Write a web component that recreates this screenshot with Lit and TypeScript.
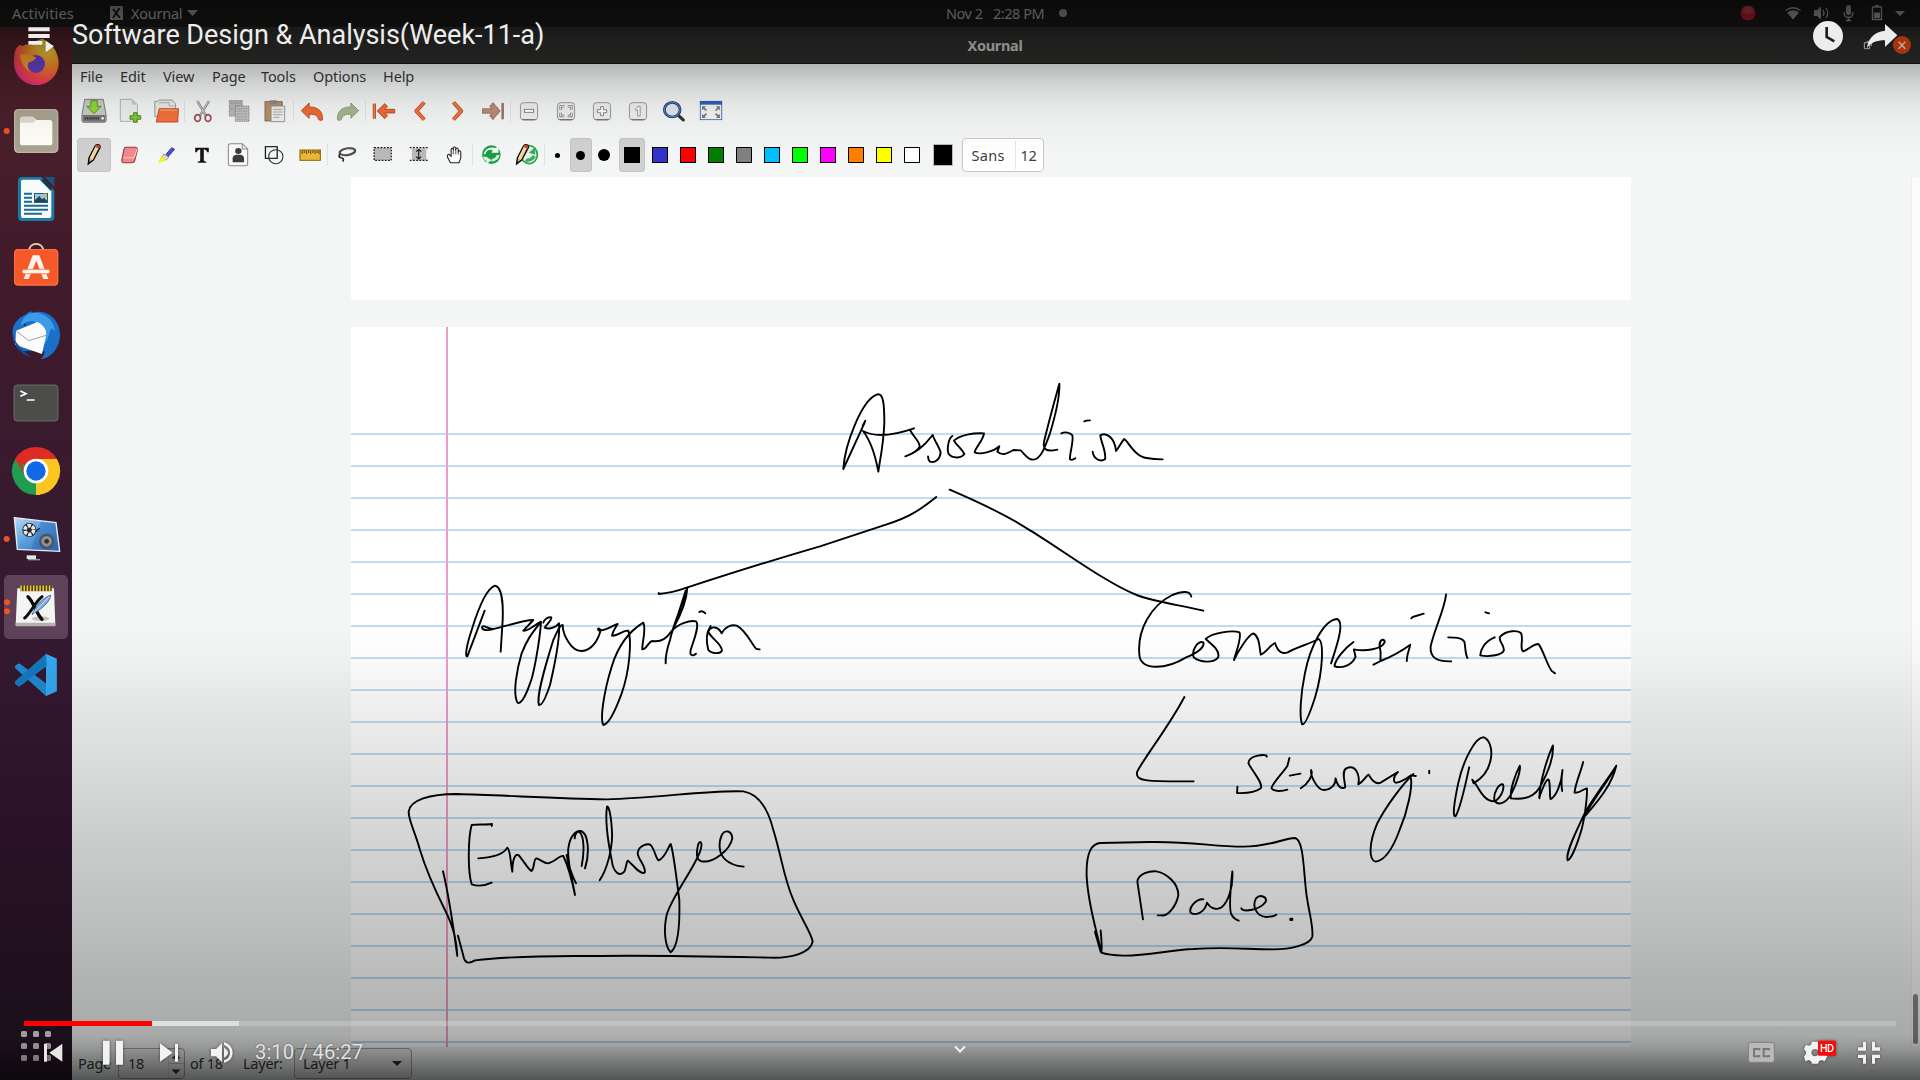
import { LitElement, html, svg, css, nothing } from "lit";
import { customElement } from "lit/decorators.js";

/* ---------- dock icons: each cell is 72x68, drawn on a 216x204 grid ---------- */
const dock = [
  { y: 27, dots: 0, art: svg`
    <defs><radialGradient id="ff" cx=".75" cy=".15" r="1"><stop offset="0" stop-color="#ffe14a"/><stop offset=".4" stop-color="#ff9a28"/><stop offset=".72" stop-color="#ff4a4a"/><stop offset="1" stop-color="#e0209a"/></radialGradient></defs>
    <path d="M47 88C55 76 62 72 66 78C76 72 84 72 92 76L104 68C112 60 122 60 128 62C150 66 176 92 176 128C176 166 146 195 109 195C72 195 42 166 42 128C42 112 43 98 47 88Z" fill="url(#ff)"/>
    <path d="M104 68C112 58 122 58 128 56C136 62 158 70 168 98C158 84 146 84 138 104C128 88 112 90 104 86Z" fill="#e8c93a"/>
    <circle cx="108" cy="132" r="27" fill="#6a44d0"/>
    <path d="M60 106C76 98 92 106 108 112C106 122 94 124 86 128C80 136 84 148 92 156C76 150 64 130 60 106Z" fill="#ffa52e"/>` },
  { y: 231, dots: 1, art: svg`
    <rect x="42" y="267" width="133" height="132" rx="13" fill="#a9a290"/><rect x="44" y="269" width="129" height="128" rx="11" fill="none" stroke="#c1bba9" stroke-width="3"/>
    <path d="M60 376V298Q60 290 68 290H98L110 300H149Q157 300 157 308V368Q157 376 149 376H68Q60 376 60 368Z" fill="#fffdf8"/>
    <path d="M60 308V298Q60 290 68 290H98L108 300L100 308Z" fill="#dedace"/>` },
  { y: 435, dots: 0, art: svg`
    <path d="M66 471H124L163 512V592Q163 603 152 603H66Q54 603 54 592V482Q54 471 66 471Z" fill="#1b7aa6"/>
    <path d="M68 479H120L154 514V588Q154 594 148 594H68Q63 594 63 588V484Q63 479 68 479Z" fill="#f8fbfc"/>
    <path d="M134 471H163V500Z" fill="#13587c"/><path d="M120 479L154 514L154 502L132 479Z" fill="#0d3c58"/>
    <path d="M72 521H96M72 533H96M72 545H96M72 557H144M72 569H144M72 581H126" stroke="#1d6b92" stroke-width="6"/>
    <rect x="102" y="519" width="42" height="30" fill="#1b6184"/><rect x="105" y="522" width="36" height="24" fill="#8ec9ea"/><path d="M105 546V540L118 528L126 538L132 533L141 542V546Z" fill="#333f45"/><circle cx="136" cy="525" r="5" fill="#f0b030"/>` },
  { y: 639, dots: 0, art: svg`
    <path d="M87 694C87 664 130 664 130 694" fill="none" stroke="#f3d0b2" stroke-width="5"/>
    <rect x="42" y="687" width="133" height="110" rx="12" fill="#f5592a"/><rect x="44" y="689" width="129" height="106" rx="10" fill="none" stroke="#ff8258" stroke-width="2"/>
    <path d="M98 706H118L145 777H130L109 722L86 777H71Z" fill="#fff3ea"/><rect x="66" y="748" width="84" height="13" rx="6" fill="#fff3ea" stroke="#f5592a" stroke-width="2"/>` },
  { y: 843, dots: 0, art: svg`
    <path d="M38 930C42 906 60 890 76 884C90 870 98 874 100 878C140 866 182 900 180 948C178 984 154 1014 122 1018C132 1008 134 1000 134 994L60 992C44 976 36 958 38 930Z" fill="#1b6fc9"/>
    <path d="M62 918C66 892 82 878 106 878C140 880 162 902 166 938C160 926 154 922 150 932C144 962 130 980 118 990C126 950 124 912 100 904C86 900 74 908 62 918Z" fill="#3b9be8"/>
    <path d="M48 932L112 906C132 916 142 932 138 948L126 1002L46 974Z" fill="#fbfbfc"/><path d="M48 932L86 962L138 946" fill="none" stroke="#8b8b96" stroke-width="2.5"/>
    <path d="M38 938C42 980 62 1002 94 1012C78 998 60 984 46 962Z" fill="#154d99"/><circle cx="74" cy="914" r="3" fill="#0b1a33"/>` },
  { y: -3, dots: 0, art: svg`
    <rect x="42" y="45" width="132" height="108" rx="10" fill="#4c4c4a" stroke="#767673" stroke-width="2.5"/>
    <path d="M61 63L78 71L61 79M80 90H104" fill="none" stroke="#fff" stroke-width="5"/>` },
  { y: 201, dots: 0, art: svg`
    <path d="M108 303L45.600 267A72 72 0 0 1 170.400 267Z" fill="#dd2c24"/><path d="M108 303L45.600 267A72 72 0 0 0 108 375Z" fill="#1f9d50"/><path d="M108 303L170.400 267A72 72 0 0 1 108 375Z" fill="#fcc521"/>
    <path d="M108 267H170.400A72 72 0 0 1 180 303L138 303Z" fill="#fcc521"/><path d="M139 321L108 375A72 72 0 0 0 120 374Z" fill="#fcc521"/><path d="M77 321L45.600 267L56 252Z" fill="#dd2c24"/>
    <circle cx="108" cy="303" r="37" fill="#fff"/><circle cx="108" cy="303" r="29" fill="#1368e8"/>` },
  { y: 405, dots: 1, art: svg`
    <defs><linearGradient id="kz" x2="1" y2="1"><stop offset="0" stop-color="#b9dcf8"/><stop offset=".45" stop-color="#5aa0dc"/><stop offset="1" stop-color="#2b62b4"/></linearGradient></defs>
    <path d="M43 443L168 458L179 544L52 538Z" fill="url(#kz)" stroke="#e6eef4" stroke-width="4"/><path d="M122 455L165 460L174 540L94 538Z" fill="#245fb8" opacity=".35"/>
    <circle cx="88" cy="480" r="21" fill="#23272b"/><circle cx="88" cy="480" r="13" fill="none" stroke="#e8e8e8" stroke-width="11" stroke-dasharray="10 3.600"/><path d="M106 484C114 486 110 474 120 476" fill="none" stroke="#222" stroke-width="4"/>
    <circle cx="140" cy="514" r="23" fill="#4d5357"/><circle cx="140" cy="514" r="16" fill="#8b9196"/><circle cx="140" cy="514" r="7" fill="#2c2f32"/>
    <path d="M80 556H108V567H80Z" fill="#e2e5e6"/><path d="M84 569H120" stroke="#9a9aa0" stroke-width="4"/>` },
  { y: 609, dots: 2, active: true, art: svg`
    <path d="M52 655H162L166 766H47Z" fill="#f4f4f2"/><path d="M47 758H166V769H47Z" fill="#b4b2b0"/>
    <ellipse cx="122" cy="746" rx="26" ry="7" fill="#c2c2c2"/>
    <path d="M61 655H155" stroke="#4a3c10" stroke-width="17"/><path d="M61 655H157" stroke="#f1cf45" stroke-width="17" stroke-dasharray="4.500 5"/>
    <path d="M84 680C100 694 108 730 126 748" fill="none" stroke="#0b0b0b" stroke-width="10" stroke-linecap="round"/><path d="M126 680C106 694 92 730 74 744" fill="none" stroke="#0b0b0b" stroke-width="9" stroke-linecap="round"/>
    <path d="M96 734C104 712 124 686 152 675C152 692 130 714 104 728Z" fill="#7fa9d6" stroke="#355f96" stroke-width="2.500"/><path d="M100 730L150 678" stroke="#dcecfa" stroke-width="2.500"/>` },
  { y: 813, dots: 0, art: svg`
    <path d="M138 852L170 866V964L138 978L45 894Q43 890 46 887L54 881Q58 879 61 882L140 942V888L61 947Q58 950 54 948L46 941Q43 938 46 934Z" fill="#1f8ad2"/>
    <path d="M138 852L170 866V964L138 978Z" fill="#35a8ee"/><path d="M138 852L46 934Q43 938 46 941L54 948Q58 950 61 947L140 886Z" fill="#1478bd"/>` },
];

/* ---------- toolbar icons: 34x34 boxes centred on (cx, cy) of a 2.8 x 3 grid ---------- */
const orange = "#ee6a35";
const zoomBox = (cx: number) => svg`<rect x="${cx - 24}" y="308" width="48" height="52" rx="9" fill="#eeeeed" stroke="#8c8c8a" stroke-width="2.500"/><path d="M${cx - 18} 359H${cx + 18}" stroke="#666" stroke-width="3"/>`;
const mainBar: { cx: number; sep?: boolean; art: unknown }[] = [
  { cx: 264, art: svg`<path d="M238 298H290L298 345V362Q298 367 292 367H236Q230 367 230 362V345Z" fill="#c9c9c7" stroke="#555" stroke-width="2"/><path d="M232 345H296V365H232Z" fill="#777"/><path d="M238 355H278" stroke="#3c3c3c" stroke-width="7" stroke-dasharray="4 2"/><circle cx="288" cy="355" r="4" fill="#eee"/><path d="M255 302H273V319H284L264 341L244 319H255Z" fill="#8fd63a" stroke="#4c8a14" stroke-width="2.500"/>` },
  { cx: 367, art: svg`<path d="M340 298H372L388 314V364H340Z" fill="#eceeea" stroke="#a9aba7" stroke-width="2.500"/><path d="M372 298V314H388Z" fill="#c9cbc7"/><path d="M377 338H387V347H397V358H387V367H377V358H367V347H377Z" fill="#7fc53a" stroke="#467f12" stroke-width="2.500"/>` },
  { cx: 466, sep: true, art: svg`<path d="M432 304H440L444 300H480L490 312V350H432Z" fill="#e9e9e7" stroke="#8f8f8d" stroke-width="2.500"/><path d="M444 308H472V318H488" fill="none" stroke="#999" stroke-width="2"/><path d="M444 326H498L496 366H436Z" fill="#f4703f" stroke="#c33b12" stroke-width="2.500"/><path d="M446 330H495" stroke="#ffab85" stroke-width="3"/>` },
  { cx: 570, art: svg`<path d="M554 303L578 346M587 303L562 346" stroke="#8a8a88" stroke-width="7"/><path d="M554 303L578 346M587 303L562 346" stroke="#dadad8" stroke-width="2.500"/><ellipse cx="555" cy="354" rx="8" ry="10" fill="none" stroke="#9c5560" stroke-width="5"/><ellipse cx="584" cy="354" rx="8" ry="10" fill="none" stroke="#9c5560" stroke-width="5"/>` },
  { cx: 669, art: svg`<g stroke="#757575" stroke-width="2.500" stroke-dasharray="3 2"><rect x="642" y="302" width="36" height="46" fill="#b5b6b5"/><rect x="659" y="318" width="38" height="46" fill="#c0c1c0"/></g><path d="M664 326H692M664 334H692M664 342H692M664 350H692M664 358H692M646 310H674M646 326H656" stroke="#8c8c8c" stroke-width="3" stroke-dasharray="3 3"/>` },
  { cx: 771, sep: true, art: svg`<rect x="743" y="305" width="48" height="58" fill="#b58f68" stroke="#7f6140" stroke-width="2.500"/><rect x="755" y="301" width="22" height="11" rx="3" fill="#888"/><path d="M760 318H798V365H760Z" fill="#eeeeec" stroke="#8d8d8b" stroke-width="2.500"/><path d="M766 328H792M766 336H792M766 344H792M766 352H784" stroke="#a2a2a0" stroke-width="2.500"/>` },
  { cx: 874, art: svg`<path d="M844 332L866 309V321C892 320 906 336 903 360Q896 363 892 358C890 346 882 342 866 343V355Z" fill="${orange}" stroke="#b5431a" stroke-width="2.500"/>` },
  { cx: 975, sep: true, art: svg`<path d="M1005 332L983 309V321C957 320 943 336 946 360Q953 363 957 358C959 346 967 342 983 343V355Z" fill="#a3b78c" stroke="#6f8558" stroke-width="2.500" stroke-dasharray="4 1.500"/>` },
  { cx: 1077, art: svg`<path d="M1050 311V356" stroke="#c4481e" stroke-width="9"/><path d="M1050 311V356" stroke="#f4855a" stroke-width="4"/><path d="M1058 333L1079 311L1087 319L1080 328H1107V339H1080L1087 347L1079 356Z" fill="${orange}" stroke="#b5431a" stroke-width="2.500"/>` },
  { cx: 1178, art: svg`<path d="M1187 307L1165 333L1187 359" fill="none" stroke="#b5431a" stroke-width="11" stroke-linejoin="round"/><path d="M1187 307L1165 333L1187 359" fill="none" stroke="#f4753f" stroke-width="7"/>` },
  { cx: 1281, art: svg`<path d="M1271 307L1293 333L1271 359" fill="none" stroke="#b5431a" stroke-width="11" stroke-linejoin="round"/><path d="M1271 307L1293 333L1271 359" fill="none" stroke="#f4753f" stroke-width="7"/>` },
  { cx: 1381, sep: true, art: svg`<path d="M1408 309V358" stroke="#9d6f5f" stroke-width="7"/><path d="M1401 333L1381 309L1372 319L1378 326H1352V340H1378L1372 347L1381 358Z" fill="#bd8b79" stroke="#8f6252" stroke-width="3" stroke-dasharray="4 1.500"/>` },
  { cx: 1484, art: svg`${zoomBox(1484)}<rect x="1471" y="328" width="26" height="9" fill="#fff" stroke="#777" stroke-width="2.500"/>` },
  { cx: 1585, art: svg`${zoomBox(1585)}<path d="M1570 329V319H1580M1590 319H1600V329M1600 338V348H1590M1580 348H1570V338" fill="none" stroke="#777" stroke-width="7"/><path d="M1570 329V319H1580M1590 319H1600V329M1600 338V348H1590M1580 348H1570V338" fill="none" stroke="#fff" stroke-width="2.500"/>` },
  { cx: 1686, art: svg`${zoomBox(1686)}<path d="M1682 320H1690V329H1699V338H1690V347H1682V338H1673V329H1682Z" fill="#fff" stroke="#777" stroke-width="2.500"/>` },
  { cx: 1786, art: svg`${zoomBox(1786)}<path d="M1779 326L1786 319H1792V348H1785V330H1779Z" fill="#fff" stroke="#888" stroke-width="2.500"/>` },
  { cx: 1886, art: svg`<path d="M1898 346L1912 360" stroke="#2f2f2f" stroke-width="9" stroke-linecap="round"/><circle cx="1881" cy="329" r="22" fill="#dfe5ee" stroke="#27407f" stroke-width="8"/><circle cx="1881" cy="329" r="22" fill="none" stroke="#6f8cc4" stroke-width="2.500"/>` },
  { cx: 1988, art: svg`<rect x="1958" y="304" width="60" height="55" fill="#f2f2f0" stroke="#3d68b0" stroke-width="2.500"/><rect x="1957" y="303" width="62" height="11" fill="#2e62b4"/><path d="M1963 319H1974L1970 323L1977 330L1973 333L1967 327L1963 331ZM2013 319H2002L2006 323L1999 330L2003 333L2009 327L2013 331ZM1963 354H1974L1970 350L1977 343L1973 340L1967 346L1963 342ZM2013 354H2002L2006 350L1999 343L2003 340L2009 346L2013 342Z" fill="#777"/>` },
];

const pencil = (dx: number) => svg`<g transform="translate(${dx} 0)"><path d="M248 492L250 474L268 437Q273 431 280 436L281 442L262 480Z" fill="#e9b06a" stroke="#0c0c0c" stroke-width="4"/><path d="M252 475L268 440L276 444L260 480Z" fill="#f3d4a4"/><path d="M266 440L270 434L281 437L278 446Z" fill="#c9463f"/><path d="M248 493L249 483L255 486Z" fill="#111"/></g>`;
const penBar: { cx: number; sep?: boolean; on?: boolean; art: unknown }[] = [
  { cx: 264, on: true, art: pencil(0) },
  { cx: 362, art: svg`<path d="M350 442H378Q384 444 383 449L375 483Q373 488 367 488H343Q338 486 339 480L345 448Q346 443 350 442Z" fill="#f0898d" stroke="#8e3a40" stroke-width="3"/><path d="M345 473H374L382 446" fill="none" stroke="#fbc2c4" stroke-width="3"/>` },
  { cx: 464, art: svg`<path d="M464 463L480 443L488 448L470 470Z" fill="#4e4ee0" stroke="#222a80" stroke-width="2.500"/><path d="M458 462L472 472L464 480L452 472Z" fill="#dedede" stroke="#777" stroke-width="2"/><path d="M452 470L464 480L444 487Z" fill="#ffff00" stroke="#e6e600" stroke-width="2"/>` },
  { cx: 566, art: svg`<path d="M547 443H585V457H581Q579 449 571 448V481Q572 485 578 485V488H554V485Q561 485 561 481V448Q553 449 551 457H547Z" fill="#141414"/>` },
  { cx: 666, art: svg`<path d="M645 431H678L693 447V491Q693 497 687 497H645Q639 497 639 491V437Q639 431 645 431Z" fill="#fafafa" stroke="#8c8c8c" stroke-width="3"/><path d="M678 431V447H693" fill="none" stroke="#8c8c8c" stroke-width="3"/><circle cx="667" cy="453" r="9" fill="#3b3b3b"/><path d="M651 487V475Q652 464 662 464H672Q682 464 683 475V487Z" fill="#3b3b3b"/>` },
  { cx: 767, art: svg`<rect x="743" y="440" width="33" height="35" fill="none" stroke="#161616" stroke-width="3.500"/><ellipse cx="772" cy="470" rx="20" ry="21" fill="none" stroke="#333" stroke-width="3"/>` },
  { cx: 866, sep: true, art: svg`<rect x="838" y="450" width="57" height="31" fill="#e8b73a" stroke="#8b6508" stroke-width="3"/><path d="M844 452V462M850 452V459M856 452V462M862 452V459M868 452V462M874 452V459M880 452V462M886 452V459M891 452V462" stroke="#2c2000" stroke-width="2.200"/>` },
  { cx: 970, art: svg`<ellipse cx="974" cy="455" rx="22" ry="10" fill="none" stroke="#222" stroke-width="6" transform="rotate(-10 974 455)"/><ellipse cx="974" cy="455" rx="22" ry="10" fill="none" stroke="#aaa" stroke-width="1.500" transform="rotate(-10 974 455)"/><path d="M954 462Q946 470 956 473Q966 474 961 485" fill="none" stroke="#222" stroke-width="4.500"/>` },
  { cx: 1071, art: svg`<rect x="1049" y="443" width="48" height="38" fill="#b9b9b9" stroke="#161616" stroke-width="3.500" stroke-dasharray="5 4"/>` },
  { cx: 1171, art: svg`<rect x="1154" y="445" width="40" height="36" fill="#b9b9b9"/><path d="M1148 443H1198M1148 481H1198" stroke="#161616" stroke-width="3.500" stroke-dasharray="5 4"/><path d="M1173 449V476M1166 455L1173 448L1180 455M1166 470L1173 477L1180 470" fill="none" stroke="#111" stroke-width="3"/>` },
  { cx: 1272, sep: true, art: svg`<path d="M1262 488L1254 472Q1252 463 1258 463L1264 469V448Q1266 442 1270 448V444Q1273 436 1277 444V447Q1281 440 1284 448V454Q1288 449 1291 456V474L1286 488Z" fill="#fff" stroke="#222" stroke-width="3"/><path d="M1270 448V463M1277 447V463M1284 452V464" stroke="#222" stroke-width="2.200"/>` },
  { cx: 1375, art: svg`<ellipse cx="1376" cy="464" rx="26" ry="28" fill="#1c9c47"/><path d="M1359 463Q1362 446 1380 450L1376 458H1396V438L1389 444Q1362 436 1354 463Z" fill="#f3fff5"/><path d="M1362 470L1377 481L1362 492V485Q1354 478 1352 470ZM1377 477Q1388 476 1391 465H1399Q1396 482 1377 485Z" fill="#d9f5df"/>` },
  { cx: 1475, sep: true, art: svg`<ellipse cx="1481" cy="464" rx="23" ry="27" fill="#e5f2e6" stroke="#2aa552" stroke-width="5"/><path d="M1498 442V464L1480 458Z M1468 486Q1492 486 1500 470L1490 466Q1486 476 1474 476Z" fill="#38ad5e"/>${pencil(1198)}` },
];

const widths = [{ r: 2.5, w: 25 }, { r: 4.5, w: 22, on: true }, { r: 6, w: 25 }];
const colours = ["#000000", "#3333cc", "#ff0000", "#008000", "#808080", "#00c0ff", "#00ff00", "#ff00ff", "#ff8000", "#ffff00", "#ffffff"];
const menus = ["File", "Edit", "View", "Page", "Tools", "Options", "Help"];

/* ---------- pen strokes ---------- */
const ink = [
  { t: "translate(820 370) scale(.33333)", d: [
    "M136 152L128 167M134 158L70 297C74 225 125 88 172 73C190 70 193 100 193 160C190 230 178 280 175 305C165 250 150 210 129 183C160 200 210 200 282 175M270 180C280 200 300 215 299 230C290 246 270 254 256 259C290 250 315 225 338 195C345 215 360 235 362 248C360 268 345 280 330 275Q324 270 324 259",
    "M397 198C385 205 380 240 386 252C400 268 425 264 433 252C425 235 408 225 402 212C420 195 460 188 492 190C490 210 465 235 464 247C480 255 520 245 538 229L532 245C545 258 560 252 580 240L602 241C612 250 622 268 638 269C660 270 672 240 690 190C705 140 720 80 718 41C710 70 690 140 672 215C668 240 680 246 712 239",
    "M724 190C735 184 752 188 757 196C762 215 748 250 750 268C756 272 762 268 766 265M793 154L799 152L810 151",
    "M818 245C820 265 840 278 855 268C860 245 842 215 841 196C860 185 885 205 888 243C895 235 905 215 913 207C925 215 945 260 980 264Q1000 268 1028 268",
    "M389 359C480 398 560 435 630 481C720 535 860 640 950 675C1010 697 1080 705 1150 722"] },
  { t: "translate(0 0)", d: ["M936.300 497C920 510 908 518 886.700 524.300L820 546.300C790 555 750 567 686.700 587.700Q672 593 658.700 594V593"] },
  { t: "translate(440 560) scale(.33333)", d: [
    "M134 152L82 289C74 290 80 255 95 210C115 145 140 85 165 77C185 80 190 130 188 180L182 275M160 207C145 212 127 212 126 202C130 190 145 212 165 206C200 198 250 180 280 180L250 212C265 215 290 190 303 185C300 240 280 350 270 370C255 415 240 435 232 427C218 400 230 330 245 280C262 235 280 215 303 185",
    "M310 188C312 178 325 170 334 172C335 182 322 190 314 203C330 210 350 200 357 190C362 240 340 330 330 375C315 420 305 437 297 435C288 410 315 320 340 240C352 215 358 195 368 195C368 225 395 275 425 273C455 272 475 240 482 210C475 200 470 208 478 212C500 212 530 190 533 192C525 205 518 215 516 227C535 228 550 210 565 212C575 240 570 330 545 400C525 455 505 492 490 495C480 480 490 400 515 320C535 255 565 215 610 188C620 210 605 250 607 268C620 268 625 245 637 243C660 247 680 235 693 215C715 190 750 180 768 184C780 195 760 245 752 270C748 290 760 288 768 281",
    "M742 83C730 130 700 190 690 240C680 270 676 290 677 310M742 83C740 120 725 160 700 205M737 92L704 195M778 156C785 151 792 155 796 160",
    "M812 198C800 215 797 240 805 270C815 282 840 282 846 272C845 250 812 235 805 215C815 195 835 200 845 220C855 200 875 193 890 197C920 212 940 262 950 267L959 268"] },
  { t: "translate(1100 570) scale(.34439 .33333)", d: [
    "M265 80C262 62 240 62 210 75C150 105 105 180 115 260C122 300 190 300 250 262C285 248 305 230 300 217C285 212 265 238 272 262C290 278 330 280 343 262C350 240 320 220 307 207C325 188 385 180 405 187C412 205 395 245 389 270C400 245 430 195 445 190C465 200 462 235 467 254C480 250 495 225 508 219C515 240 525 255 545 247C575 230 600 225 635 207C650 215 648 300 625 380C608 435 595 465 587 463C578 440 583 370 595 310C610 230 650 150 688 147C710 155 692 215 671 280",
    "M736 216C710 235 682 270 681 289C710 298 735 280 742 260L737 238C770 245 820 238 827 215C822 202 810 212 812 230C818 250 814 265 814 272M794 284L815 273C850 258 880 240 901 224C898 240 890 255 891 273M904 145L908 141L940 131",
    "M1005 73C1000 120 970 180 960 230C958 265 980 275 1020 274M1011 202C1030 202 1050 202 1058 215C1062 235 1060 250 1067 264M1119 127L1130 130",
    "M1146 202C1115 215 1105 240 1104 256C1130 262 1170 255 1173 240C1172 220 1155 212 1162 200C1180 180 1215 180 1223 190C1230 210 1218 235 1228 244C1245 240 1255 222 1273 222C1285 235 1300 290 1312 303L1321 310",
    "M245 381C200 470 130 560 108 605C100 635 140 635 272 634",
    "M484 560C488 550 430 555 431 580C440 600 475 640 467 655C450 668 420 670 398 669L399 650M550 564L544 588C530 610 500 640 498 655C505 666 530 664 544 659M551 617L582 611",
    "M583 655C605 640 620 615 613 600C610 615 630 660 650 660C675 658 685 640 684 625C690 650 700 658 712 652C712 635 700 605 715 595C745 580 755 620 750 643C765 635 770 620 780 614C790 630 800 645 815 638L865 606C850 620 850 640 862 638C880 635 895 622 903 616L917 618M903 625C907 650 895 720 870 780C845 850 820 873 800 875C780 870 780 820 805 760C830 710 880 640 910 612M956 602V610",
    "M1072 592C1060 650 1045 720 1032 739C1022 740 1030 690 1040 640C1055 570 1090 500 1115 502C1145 515 1150 600 1085 640L1081 629C1095 640 1110 695 1145 694C1165 685 1175 655 1170 643C1160 640 1142 665 1145 690C1155 710 1180 700 1195 670C1210 640 1222 600 1219 587C1205 615 1190 660 1193 685C1230 690 1260 680 1275 655C1300 610 1318 560 1315 526C1300 560 1275 640 1276 685",
    "M1276 680C1290 640 1300 620 1304 632C1308 650 1305 675 1308 687C1325 680 1340 640 1343 600C1340 620 1340 650 1342 663M1403 576C1395 610 1380 640 1378 668C1395 670 1405 655 1414 655C1415 690 1405 760 1395 790C1380 840 1365 870 1358 871C1350 850 1385 780 1405 735C1430 685 1480 620 1499 587C1485 650 1440 700 1403 745C1425 700 1470 640 1498 590"] },
  { t: "translate(1060 820) scale(.33333)", d: [
    "M122 331C124 360 127 380 124 398C110 330 85 260 80 170C78 110 88 72 120 69L270 66C400 64 460 80 550 80C630 80 670 55 705 54C735 60 730 180 742 240C750 290 760 320 757 350C750 375 690 388 640 388C560 388 500 380 400 387C330 390 260 408 190 407C160 406 135 402 124 398L105 335M106 340L122 395",
    "M249 298L232 185C235 160 270 152 290 154C320 160 355 190 355 225C350 255 325 290 305 286L293 286M430 238C410 235 385 262 392 278C410 290 435 275 441 248C450 265 470 272 485 262C505 245 520 200 517 154C512 200 505 270 515 285C522 297 530 300 536 302M544 265C550 278 600 270 617 245C622 230 600 222 588 235C575 260 590 290 620 291C635 290 645 288 649 284M691 296H697V300H691Z"] },
  { t: "translate(390 770) scale(.33333)", d: [
    "M159 304C175 370 190 470 202 558C200 520 195 480 165 420C130 350 105 290 90 240C75 185 55 150 56 125C60 90 120 72 200 72C350 76 500 86 650 88C800 85 950 60 1060 64C1110 72 1135 120 1150 180C1175 260 1180 320 1210 390C1235 450 1265 490 1268 515C1262 550 1200 565 1140 563C1000 560 800 555 600 558C480 557 350 560 255 571C240 580 228 582 222 565L204 497",
    "M305 168L306 162C285 165 260 162 245 165C235 200 232 300 245 343C265 350 290 345 305 338M265 265C300 263 340 255 352 233C362 240 362 285 367 305C367 270 375 250 385 255C400 270 415 300 425 303C435 290 430 265 440 265C455 270 460 280 475 280C495 275 510 255 520 258C535 290 550 350 555 375C550 340 530 270 535 235C540 195 560 180 573 183C595 190 600 250 585 295M554 205C555 195 560 185 568 185C585 200 582 255 575 288M530 255C535 290 548 320 558 340",
    "M629 331C650 300 672 230 665 170C662 130 655 105 651 110C645 150 655 220 665 270C670 310 690 320 703 305C710 290 708 275 714 272C730 285 750 315 764 308C770 290 745 270 743 250C745 225 775 220 782 225C795 240 798 268 806 271C825 265 835 230 842 222C850 240 860 330 868 390C870 470 865 530 842 547C825 530 820 480 830 435C845 380 910 300 930 245C940 215 930 210 925 222C918 250 918 270 935 274C970 280 1020 240 1027 205C1025 180 1005 180 997 192C985 215 985 250 1005 268C1020 282 1040 288 1061 290"] },
];

@customElement("app-root")
export class AppRoot extends LitElement {
  static styles = css`
    :host { display: block; width: 1920px; height: 1080px; overflow: hidden; position: relative; background: #000; font-family: "Noto Sans", "Open Sans", sans-serif; font-size: 14.5px; color: #3c3c3c; }
    * { box-sizing: border-box; }
    svg { display: block; flex: none; }
    .desktop { width: 1920px; height: 1080px; display: flex; flex-direction: column; }
    .shell { height: 27px; flex: none; background: #1d1d1c; color: #d6d6d4; display: grid; grid-template-columns: 98px 848px 47px 63px 1fr; align-items: center; }
    .shell span { line-height: 20px; white-space: nowrap; padding-bottom: 2px; }
    .act { padding-left: 12px; letter-spacing: .15px; }
    .shell .appname { display: flex; align-items: center; gap: 8px; padding-left: 12px; letter-spacing: -.25px; }
    .caret { margin-left: -3px; }
    .date { letter-spacing: -.45px; }
    .tray { display: flex; justify-content: flex-end; }
    .below { flex: 1; display: flex; min-height: 0; }
    .dock { width: 72px; flex: none; padding-top: 2px; display: flex; flex-direction: column; background: linear-gradient(#50202a 0, #471d2a 12%, #3c1a2c 32%, #351a31 55%, #321530 75%, #261626 100%); }
    .app { width: 72px; height: 68px; flex: none; position: relative; }
    .app.active::before { content: ""; position: absolute; left: 4px; top: 2px; width: 64px; height: 64px; border-radius: 5px; background: #5f4259; }
    .app svg { position: relative; }
    .grid { margin: auto 0 19px 21px; display: grid; grid-template-columns: repeat(3, 6px); gap: 6px; }
    .grid i { height: 6px; border-radius: 1.5px; background: #e9e2e8; }
    .window { flex: 1; display: flex; flex-direction: column; min-width: 0; background: #f4f6f6; }
    .titlebar { height: 37px; flex: none; background: linear-gradient(#323130, #2f2e2d); border-bottom: 1px solid #171716; display: grid; place-items: center; color: #d8d5d2; font-weight: 700; font-size: 14.5px; padding: 0 2px 0 0; letter-spacing: -.3px; }
    .menu { height: 25px; flex: none; display: grid; grid-template-columns: 40px 43px 49px 49px 52px 70px 60px; padding: 0 0 2px 8px; align-items: center; color: #393939; letter-spacing: -.1px; }
    .bar { display: flex; align-items: center; flex: none; padding-left: 4px; height: 44px; }
    .slot { width: 36.28px; display: grid; place-items: center; position: relative; flex: none; }
    .two .slot { width: 36.06px; }
    .slot.sep { background: linear-gradient(#e2e4e3, #e2e4e3) right center / 1px 22px no-repeat; }
    .on { background: #d0d0d0; border-radius: 4px; box-shadow: inset 0 0 0 1px #c6c6c6; }
    .dots { display: flex; }
    .dot { height: 34px; display: grid; place-items: center; }
    .dot i { border-radius: 50%; background: #000; }
    .swatches { display: flex; margin-left: 1px; }
    .swatch { width: 28px; height: 34px; display: grid; place-items: center; }
    .swatch.on { width: 26px; margin: 0 1px; }
    .swatch i { width: 16px; height: 16px; border: 1px solid #000; }
    .big { width: 20px; height: 22px; background: #000; border: 1px solid #bbb; margin: 0 9px 0 7px; }
    .font { height: 34px; width: 82px; border: 1px solid #c9c9c9; border-radius: 4px; background: #fff; display: flex; align-items: center; padding-left: 9px; }
    .font b { font-weight: 400; width: 43px; letter-spacing: .3px; } .font em { font-style: normal; border-left: 1px solid #e4e4e4; padding-left: 5px; line-height: 28px; letter-spacing: -.4px; }
    .work { flex: 1; display: flex; min-height: 0; }
    .pages { flex: 1; display: flex; flex-direction: column; align-items: flex-start; gap: 27px; padding-left: 279px; }
    .page { width: 1280px; background: #fff; }
    .page.prev { height: 123px; } .page.cur { height: 720px; }
    .scroll { width: 9px; background: #fbfbfb; border-left: 1px solid #eee; padding: 817px 2px 0 1px; }
    .scroll i { display: block; width: 5px; height: 50px; border-radius: 3px; background: #8c8988; }
    .status { height: 33px; flex: none; display: flex; align-items: center; padding-left: 6px; color: #383838; }
    .status span { white-space: nowrap; letter-spacing: -.25px; padding-bottom: 2px; }
    .spin { width: 67px; height: 31px; border: 1px solid #a5a5a5; border-radius: 4px; background: #f0f0f0; display: flex; align-items: center; padding-left: 9px; justify-content: space-between; }
    .w-page { width: 40px; } .w-of { width: 53px; margin-left: 5px; } .w-layer { width: 51px; }
    .combo { width: 118px; height: 31px; border: 1px solid #a5a5a5; border-radius: 4px; background: #efefee; display: flex; align-items: center; justify-content: space-between; padding: 0 9px 0 8px; }
    .shade { position: absolute; left: 0; width: 1920px; pointer-events: none; }
    .shade.top { top: 0; height: 160px; background: linear-gradient(rgba(0,0,0,.66), rgba(0,0,0,.54) 22px, rgba(0,0,0,.36) 42px, rgba(0,0,0,.26) 64px, rgba(0,0,0,.14) 84px, rgba(0,0,0,.06) 105px, rgba(0,0,0,.02) 130px, rgba(0,0,0,0)); }
    .shade.bottom { bottom: 0; height: 460px; background: linear-gradient(rgba(0,0,0,0), rgba(0,0,0,.015) 35px, rgba(0,0,0,.06) 80px, rgba(0,0,0,.115) 150px, rgba(0,0,0,.175) 230px, rgba(0,0,0,.225) 300px, rgba(0,0,0,.27) 360px, rgba(0,0,0,.31) 415px, rgba(0,0,0,.38) 427px, rgba(0,0,0,.51) 442px, rgba(0,0,0,.66)); }
    .player { position: absolute; inset: 0; display: flex; flex-direction: column; font-family: Roboto, sans-serif; color: #ededed; }
    .head { height: 72px; display: flex; align-items: center; }
    .head h1 { margin: 0; width: 1732px; font-weight: 400; font-size: 27px; line-height: 70px; white-space: nowrap; padding-bottom: 2px; letter-spacing: -.02px; }
    .track { margin: auto 24px 0; height: 5px; background: rgba(255,255,255,.2); display: flex; flex: none; }
    .track .played { width: 128px; background: #f00; } .track .loaded { width: 87px; background: rgba(255,255,255,.52); }
    .controls { height: 54px; flex: none; display: grid; grid-template-columns: 1fr auto 1fr; padding: 7px 0 0; align-items: start; }
    .left, .right { display: flex; align-items: center; height: 40px; } .left { padding-left: 40px; }
    .right { justify-content: flex-end; padding-right: 35px; }
    .time { font-size: 20.3px; color: #e2e2e2; text-shadow: 0 0 2px rgba(0,0,0,.45); line-height: 38px; padding-bottom: 2px; }
    .g26 { margin-right: 26px; } .g25 { margin-right: 25px; } .g20 { margin-right: 20px; } .g15 { margin-right: 15px; }
    .chev { margin-top: 9px; } .sh { filter: drop-shadow(0 0 1.500px rgba(0,0,0,.5)); }
  `;

  private slot34(i: { cx: number; sep?: boolean; on?: boolean; art: unknown }, cy: number) {
    return html`<div class="slot ${i.sep ? "sep" : ""}"><svg class=${i.on ? "on" : ""} width="34" height="34" viewBox="${i.cx - 47.6} ${cy - 51} 95.2 102" preserveAspectRatio="none">${i.art}</svg></div>`;
  }

  render() {
    const rules = Array.from({ length: 20 }, (_, k) => 433 + 32 * k);
    return html`
      <div class="desktop">
        <div class="shell">
          <span class="act">Activities</span>
          <span class="appname"><svg width="13" height="14" viewBox="0 0 13 14"><rect width="13" height="14" rx="1" fill="#b9b9b7"/><path d="M3 3L10 12M9.500 2L3 12" stroke="#222" stroke-width="2"/></svg>Xournal<svg class="caret" width="11" height="6" viewBox="0 0 11 6"><path d="M0 0H11L5.500 6Z" fill="#c0c0be"/></svg></span>
          <span class="date">Nov 2</span><span class="date">2:28 PM</span>
          <div class="tray">
            <svg width="864" height="27" viewBox="1056 0 864 27">
              <circle cx="1063" cy="13" r="4" fill="#b5b5b3"/>
              <circle cx="1748" cy="13" r="7.500" fill="#e0203a"/><ellipse cx="1748" cy="10" rx="5.500" ry="4" fill="#f08a70" opacity=".5"/>
              <g fill="#bbb"><path d="M1787 12.500Q1793 8 1799 12.500L1793 19.500Z"/><path d="M1785.500 10.500Q1793 5 1800.500 10.500" fill="none" stroke="#bbb" stroke-width="1.500"/>
              <path d="M1814 10H1817L1821 6.500V19.500L1817 16H1814Z"/><path d="M1823 10Q1825 13 1823 16M1826 8Q1829.500 13 1826 18" fill="none" stroke="#bbb" stroke-width="1.300"/>
              <rect x="1846" y="5" width="5" height="10" rx="2.500"/><path d="M1844 12Q1844 17.500 1848.500 17.500Q1853 17.500 1853 12M1848.500 17V20M1846 20.500H1851" fill="none" stroke="#bbb" stroke-width="1.300"/>
              <path d="M1872.500 7H1881.500V19.500H1872.500Z" fill="none" stroke="#bbb" stroke-width="1.400"/><path d="M1875 5H1879V7H1875ZM1874 12.500H1880V18H1874ZM1895 11H1905L1900 16Z"/></g>
            </svg>
          </div>
        </div>
        <div class="below">
          <div class="dock">
            ${dock.map((d) => html`<div class="app ${d.active ? "active" : ""}"><svg width="72" height="68" viewBox="0 ${d.y} 216 204">${d.art}
              ${d.dots === 1 ? svg`<circle cx="20" cy="${d.y + 102}" r="9" fill="#ee5327"/>` : nothing}
              ${d.dots === 2 ? svg`<circle cx="21" cy="${d.y + 88}" r="9" fill="#ee5327"/><circle cx="21" cy="${d.y + 115}" r="9" fill="#ee5327"/>` : nothing}</svg></div>`)}
            <div class="grid">${Array.from({ length: 9 }, () => html`<i></i>`)}</div>
          </div>
          <div class="window">
            <div class="titlebar">Xournal</div>
            <div class="menu">${menus.map((m) => html`<span>${m}</span>`)}</div>
            <div class="bar one">${mainBar.map((i) => this.slot34(i, 333))}</div>
            <div class="bar two">
              ${penBar.map((i) => this.slot34(i, 465))}
              <div class="dots">${widths.map((w) => html`<div class="dot ${w.on ? "on" : ""}" style="width:${w.w}px"><i style="width:${w.r * 2}px;height:${w.r * 2}px"></i></div>`)}</div>
              <div class="swatches">${colours.map((c, k) => html`<div class="swatch ${k === 0 ? "on" : ""}"><i style="background:${c}"></i></div>`)}</div>
              <div class="big"></div>
              <div class="font"><b>Sans</b><em>12</em></div>
            </div>
            <div class="work">
              <div class="pages">
                <div class="page prev"></div>
                <div class="page cur">
                  <svg width="1280" height="720" viewBox="351 327 1280 720">
                    ${rules.map((y) => svg`<rect x="351" y="${y}" width="1280" height="2" fill="#c0dbf2"/>`)}
                    <rect x="446" y="327" width="2" height="720" fill="#ee9cc8"/>
                    ${ink.map((g) => svg`<g transform="${g.t}">${g.d.map((d) => svg`<path d="${d}" fill="none" stroke="#000" stroke-width="1.900" stroke-linecap="round" stroke-linejoin="round" vector-effect="non-scaling-stroke"/>`)}</g>`)}
                  </svg>
                </div>
              </div>
              <div class="scroll"><i></i></div>
            </div>
            <div class="status">
              <span class="w-page">Page</span>
              <div class="spin"><span>18</span><svg width="16" height="29" viewBox="0 0 16 29"><path d="M0 0V29M0 14.500H16" stroke="#c5c5c5"/><path d="M3.500 9.500L8 5L12.500 9.500ZM3.500 20.500L8 25L12.500 20.500Z" fill="#2e2e2e"/></svg></div>
              <span class="w-of">of 18</span><span class="w-layer">Layer:</span>
              <div class="combo"><span>Layer 1</span><svg width="10" height="5" viewBox="0 0 10 5"><path d="M0 0H10L5 5Z" fill="#2e2e2e"/></svg></div>
            </div>
          </div>
        </div>
      </div>
      <div class="shade top"></div>
      <div class="shade bottom"></div>
      <div class="player">
        <div class="head">
          <svg width="72" height="72" viewBox="0 -60 216 216"><path d="M85 22H149V34H85ZM85 42H149V54H85ZM85 63H127V74H85ZM137 62L162 79L137 97Z" fill="#ededed"/></svg>
          <h1>Software Design &amp; Analysis(Week-11-a)</h1>
          <svg width="116" height="72" viewBox="912 0 348 216">
            <path d="M1093 128H1109V146H1093ZM1100 124H1114V138" fill="none" stroke="#a0a0a0" stroke-width="3"/>
            <circle cx="1206" cy="135" r="27" fill="#a8330f"/><path d="M1196 125L1216 146M1216 125L1196 146" stroke="#c5aba2" stroke-width="4"/>
            <circle cx="984" cy="108" r="45" fill="#ededed"/><path d="M980 81V111L1003 124" fill="none" stroke="#1f1f1f" stroke-width="8"/>
            <path d="M1155 72L1192 106L1155 141V121C1130 121 1112 128 1101 145C1104 118 1120 96 1155 92Z" fill="#ededed"/>
          </svg>
        </div>
        <div class="track"><div class="played"></div><div class="loaded"></div></div>
        <div class="controls">
          <div class="left">
            <svg class="sh g26" width="30" height="40" viewBox="120 160 90 120"><path d="M132 192H141V246H132ZM187 192V246L148 219Z" fill="#e6e6e6"/></svg>
            <svg class="sh g25" width="34" height="40" viewBox="288 160 102 120"><path d="M309 183H329V255H309ZM348 183H369V255H348Z" fill="#f2f2f2"/></svg>
            <svg class="sh g20" width="30" height="40" viewBox="465 160 90 120"><path d="M480 191V246L518 219ZM525 192H534V246H525Z" fill="#f2f2f2"/></svg>
            <svg class="sh g15" width="35" height="40" viewBox="615 160 105 120"><path d="M633 208H648L666 190V248L648 230H633Z" fill="#f2f2f2"/><path d="M672 204Q684 211 684 219Q684 227 672 234ZM672 187Q698 196 698 219Q698 242 672 250V242Q690 236 690 219Q690 202 672 195Z" fill="#f2f2f2"/></svg>
            <span class="time">3:10 / 46:27</span>
          </div>
          <svg class="chev" width="16" height="16" viewBox="0 0 16 16"><path d="M3 2.500L8 7.500L13 2.500" transform="translate(0 2)" fill="none" stroke="#eee" stroke-width="2.200"/></svg>
          <div class="right">
            <svg width="55" height="40" viewBox="195 160 165 120"><rect x="205" y="188" width="78" height="60" rx="7" fill="#b9b9b9" stroke="#808080" stroke-width="3"/><path d="M238 212V208H222V230H238V226M267 212V208H251V230H267V226" fill="none" stroke="#777" stroke-width="6"/></svg>
            <svg class="sh" width="53" height="40" viewBox="360 160 159 120"><path d="M396 186H414L417 196L424 200L434 196L442 211L434 218V222L442 230L434 245L424 241L417 245L414 252H396L393 245L386 241L376 245L372 230L378 222V216L372 208L378 195L386 198L393 195ZM405 208A11 11 0 1 0 405.010 208Z" fill="#f2f2f2" fill-rule="evenodd"/><rect x="414" y="183" width="54" height="45" rx="3" fill="#f80b0b"/><text x="441" y="216" text-anchor="middle" font-size="32" font-weight="500" textLength="42" fill="#fff">HD</text></svg>
            <svg class="sh" width="32" height="40" viewBox="519 160 96 120"><path d="M549 186H558V213H534V203H549ZM576 186H585V203H600V213H576ZM534 225H558V252H549V235H534ZM576 225H600V235H585V252H576Z" fill="#f2f2f2"/></svg>
          </div>
        </div>
      </div>`;
  }
}
